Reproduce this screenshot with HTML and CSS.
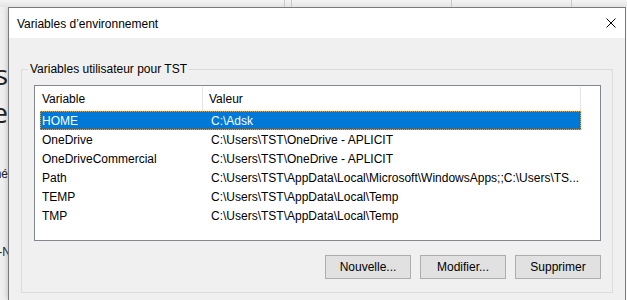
FILE: index.html
```html
<!DOCTYPE html>
<html lang="fr">
<head>
  <meta charset="UTF-8" />
  <title>Variables d’environnement</title>
  <link rel="stylesheet" href="styles.css">
</head>
<body>
  <!-- fenêtre en arrière-plan (bord supérieur) -->
  <div class="back-top">
    <span class="tick t1"></span>
    <span class="tick t2"></span>
    <span class="tick t3"></span>
    <span class="tick t4"></span>
  </div>

  <div class="screen">
    <!-- bout de la fenêtre derrière, à gauche -->
    <div class="back-left">
      <span class="big b1">Paramètres</span>
      <span class="big b2">Variable</span>
      <span class="small s1">Paramètres par défaut déterminé</span>
      <span class="small s2">Profil utilisateur TST-N</span>
    </div>

    <!-- la boîte de dialogue -->
    <div class="dialog">
      <div class="titlebar">
        <span class="title">Variables d’environnement</span>
        <svg class="close" width="10" height="10" viewBox="0 0 10 10">
          <path d="M0.5 0.5 L9.5 9.5 M9.5 0.5 L0.5 9.5" stroke="#000" stroke-width="1" fill="none" />
        </svg>
      </div>

      <div class="dialog-body">
        <fieldset class="group">
          <legend>Variables utilisateur pour TST</legend>

          <div class="listview">
            <div class="lv-header">
              <div class="col col-name">Variable</div>
              <div class="col col-value">Valeur</div>
              <div class="col col-rest"></div>
            </div>
            <div class="lv-rows">
              <div class="lv-row selected">
                <span class="cell cell-name">HOME</span>
                <span class="cell cell-value">C:\Adsk</span>
              </div>
              <div class="lv-row">
                <span class="cell cell-name">OneDrive</span>
                <span class="cell cell-value">C:\Users\TST\OneDrive - APLICIT</span>
              </div>
              <div class="lv-row">
                <span class="cell cell-name">OneDriveCommercial</span>
                <span class="cell cell-value">C:\Users\TST\OneDrive - APLICIT</span>
              </div>
              <div class="lv-row">
                <span class="cell cell-name">Path</span>
                <span class="cell cell-value">C:\Users\TST\AppData\Local\Microsoft\WindowsApps;;C:\Users\TS...</span>
              </div>
              <div class="lv-row">
                <span class="cell cell-name">TEMP</span>
                <span class="cell cell-value">C:\Users\TST\AppData\Local\Temp</span>
              </div>
              <div class="lv-row">
                <span class="cell cell-name">TMP</span>
                <span class="cell cell-value">C:\Users\TST\AppData\Local\Temp</span>
              </div>
            </div>
          </div>

          <div class="buttons">
            <button>Nouvelle...</button>
            <button>Modifier...</button>
            <button>Supprimer</button>
          </div>
        </fieldset>
      </div>
    </div>

    <div class="back-right"></div>
  </div>
</body>
</html>
```

FILE: styles.css
```css
/* page : bureau Windows derrière la boîte */
html, body {
  margin: 0;
  padding: 0;
}
body {
  width: 627px;
  height: 300px;
  overflow: hidden;
  background-color: #f0f0f0;
  font-family: "Liberation Sans", Arial, sans-serif;
  font-size: 12px;
  color: #000;
}
/* bande du haut (fenêtre derrière) */
.back-top {
  height: 7px;
  background: linear-gradient(#f4f4f4, #e4e4e4);
  position: relative;
}
.tick {
  position: absolute;
  top: 0;
  width: 1px;
  height: 7px;
  background-color: #c8c8c8;
}
.t1 { left: 284px; }
.t2 { left: 291px; }
.t3 { left: 451px; }
.t4 { left: 571px; }

.screen {
  display: flex;
  height: 293px;
}
/* bande de gauche */
.back-left {
  width: 8px;
  flex: none;
  overflow: hidden;
  display: flex;
  flex-direction: column;
  align-items: flex-end;
  background-color: #f0f0f0;
}
.back-left span {
  white-space: nowrap;
  color: #222;
}
.big {
  font-family: "Open Sans", "Liberation Sans", sans-serif;
  font-size: 28px;
  line-height: 38px;
}
.b1 { margin-top: 48px; }
.small {
  font-size: 12px;
  line-height: 14px;
}
.s1 { margin-top: 36px; }
.s2 {
  margin-top: 64px;
  margin-right: -3px;
}

.back-right {
  width: 1px;
  flex: none;
  background-color: #fafafa;
}
/* boîte de dialogue */
.dialog {
  width: 616px;
  flex: none;
  border: 1px solid #7a7a7a;
  border-bottom: 0;
  background-color: #f0f0f0;
  box-shadow: 0 0 6px rgba(0, 0, 0, 0.25);
}
.titlebar {
  height: 30px;
  background-color: #fff;
  display: flex;
  align-items: center;
  padding-left: 8px;
}
.title {
  flex: 1;
  line-height: 14px;
  margin-top: 1px;
}
.close {
  margin-right: 9px;
}
.dialog-body {
  padding: 24px 12px 0 12px;
}
/* cadre "Variables utilisateur" */
.group {
  margin: 0;
  padding: 0 11px 13px 12px;
  border: 1px solid #dcdcdc;
  min-width: 0;
}
.group legend {
  margin-left: -6px;
  padding: 0 2px;
  line-height: 15px;
}
/* liste */
.listview {
  margin-top: 8px;
  height: 154px;
  border: 1px solid #828790;
  background-color: #fff;
  overflow: hidden;
}
.lv-header {
  display: flex;
  height: 25px;
  box-sizing: border-box;
  padding-top: 1px;
}
.col {
  line-height: 24px;
  white-space: nowrap;
}
.col-name {
  width: 160px;
  padding-left: 7px;
  border-right: 1px solid #e5e5e5;
}
.col-value {
  width: 371px;
  padding-left: 6px;
  border-right: 1px solid #e5e5e5;
}
.col-rest {
  flex: 1;
}
.lv-rows {
  padding-left: 5px;
}
.lv-row {
  display: flex;
  width: 541px;
  height: 19px;
  padding-top: 1px;
  line-height: 18px;
  white-space: nowrap;
  box-sizing: border-box;
}
.lv-row.selected {
  background-color: #0078d7;
  color: #fff;
  outline: 1px dotted #ff9a1c;
  outline-offset: -1px;
}
.cell-name {
  width: 162px;
  padding-left: 2px;
}
.cell-value {
  padding-left: 7px;
}
/* boutons */
.buttons {
  display: flex;
  justify-content: flex-end;
  gap: 9px;
  margin-top: 14px;
}
.buttons button {
  width: 86px;
  height: 24px;
  margin: 0;
  padding: 0;
  font-family: "Liberation Sans", Arial, sans-serif;
  font-size: 12px;
  color: #000;
  background-color: #e1e1e1;
  border: 1px solid #adadad;
  border-radius: 0;
}
```
